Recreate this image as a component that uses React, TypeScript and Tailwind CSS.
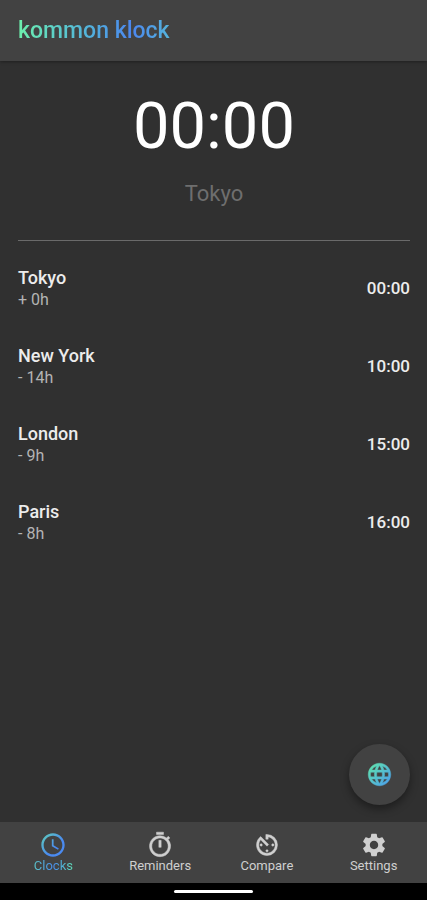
import { useState } from 'react';
import { MdAccessTime, MdAvTimer, MdLanguage, MdOutlineTimer, MdSettings } from 'react-icons/md';

const clocks = [
  { city: 'Tokyo', offset: '+ 0h', time: '00:00' },
  { city: 'New York', offset: '- 14h', time: '10:00' },
  { city: 'London', offset: '- 9h', time: '15:00' },
  { city: 'Paris', offset: '- 8h', time: '16:00' },
];

const tabs = [
  { label: 'Clocks', Icon: MdAccessTime, weight: 0 },
  { label: 'Reminders', Icon: MdOutlineTimer, weight: 0.4 },
  { label: 'Compare', Icon: MdAvTimer, weight: 0.4 },
  { label: 'Settings', Icon: MdSettings, weight: 0 },
];

// Shared gradients for the accent icons
function IconGradients() {
  return (
    <svg className="absolute size-0" aria-hidden="true">
      <defs>
        <linearGradient id="accent" x1="2" y1="2" x2="22" y2="22" gradientUnits="userSpaceOnUse">
          <stop offset="0" stopColor="#5fd0b8" />
          <stop offset="0.6" stopColor="#4a8af0" />
        </linearGradient>
        <linearGradient id="accentSoft" x1="2" y1="2" x2="22" y2="22" gradientUnits="userSpaceOnUse">
          <stop offset="0.1" stopColor="#5fe0b0" />
          <stop offset="1" stopColor="#4a9af0" />
        </linearGradient>
      </defs>
    </svg>
  );
}

export default function App() {
  const [active, setActive] = useState('Clocks');

  return (
    <div className="min-h-screen flex flex-col bg-[#303030] text-[#ececec] font-['Roboto',sans-serif]">
      <IconGradients />

      <header className="relative h-[61px] px-[18px] flex items-center bg-[#424242] shadow-[0_1px_3px_rgba(0,0,0,0.35)]">
        <h1 className="text-[23px] leading-7 font-medium text-transparent bg-clip-text bg-linear-to-r from-[#6df0ac] via-[#4c86ee] via-75% to-[#56b4dc]">
          kommon klock
        </h1>
      </header>

      <main className="flex-1 flex flex-col pl-[18px] pr-[17px]">
        {/* Main clock */}
        <section className="pt-6 pb-[30px] text-center border-b border-[#6a6a6a]">
          <div className="text-[65px] leading-[82px] text-white">00:00</div>
          <div className="mt-[11px] text-[22px] leading-8 text-[#6e6e6e]">Tokyo</div>
        </section>

        <ul className="pt-2">
          {clocks.map((clock) => (
            <li key={clock.city} className="h-[78px] flex items-center justify-between">
              <div>
                <div className="text-[18px] leading-6 font-medium">{clock.city}</div>
                <div className="text-[16px] leading-5 text-[#b4b4b4]">{clock.offset}</div>
              </div>
              <time className="text-[17px] leading-6 font-medium">{clock.time}</time>
            </li>
          ))}
        </ul>

        <button
          type="button"
          aria-label="Add city"
          className="mt-auto mb-[17px] self-end size-[61px] rounded-full flex items-center justify-center bg-[#424242] shadow-[0_4px_8px_rgba(0,0,0,0.4)]"
        >
          <MdLanguage
            size={27}
            fill="url(#accentSoft)"
            stroke="url(#accentSoft)"
            strokeWidth={0.4}
            className="[&>path[fill=none]]:hidden"
          />
        </button>
      </main>

      <nav className="h-[61px] grid grid-cols-4 bg-[#424242]">
        {tabs.map(({ label, Icon, weight }) => (
          <button
            key={label}
            type="button"
            onClick={() => setActive(label)}
            className="flex flex-col items-center pt-[9px] text-[#cfcfcf]"
          >
            <Icon
              size={28}
              strokeWidth={weight}
              fill={active === label ? 'url(#accent)' : 'currentColor'}
              className="[&>path[fill=none]]:hidden"
            />
            {active === label ? (
              <span className="-mt-px text-[13px] leading-4 text-transparent bg-clip-text bg-linear-to-r from-[#5cc4c8] via-[#4a8cec] to-[#62dcb4]">
                {label}
              </span>
            ) : (
              <span className="-mt-px text-[13px] leading-4">{label}</span>
            )}
          </button>
        ))}
      </nav>

      {/* System gesture bar */}
      <div className="h-[17px] flex items-center justify-center bg-black">
        <div className="w-[79px] h-[3px] rounded-full bg-white" />
      </div>
    </div>
  );
}
